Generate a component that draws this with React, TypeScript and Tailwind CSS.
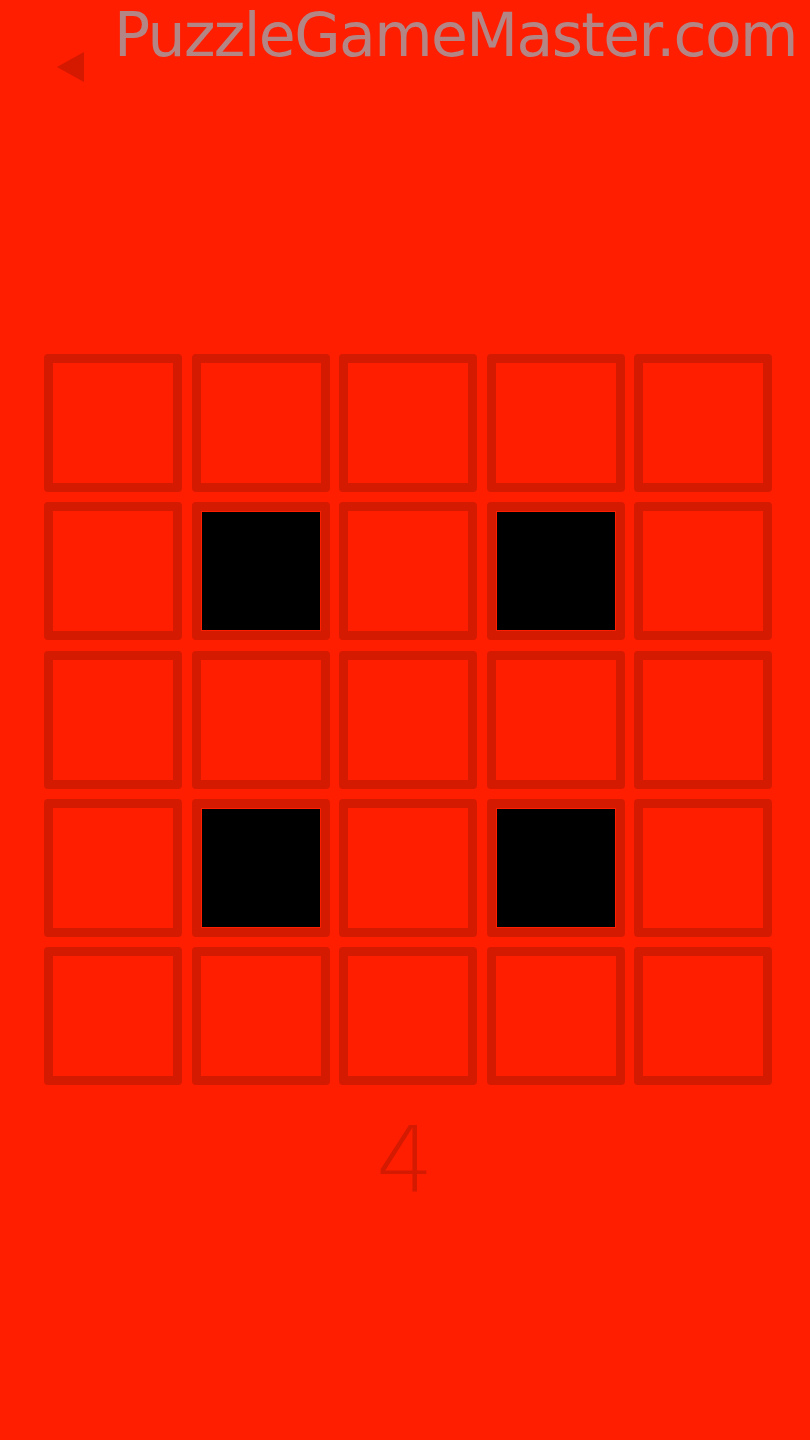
export default function App() {
  const dark = new Set([6, 8, 16, 18]);
  return (
    <div className="w-[810px] h-[1440px] bg-[#ff1e00] overflow-hidden flex flex-col">
      <div className="h-[56px] pl-[114px] flex items-start">
        <span
          className="text-[60px] leading-[70px] text-[#b38585] whitespace-nowrap tracking-[-1.6px]"
          style={{ fontFamily: '"DejaVu Sans", sans-serif' }}
        >
          PuzzleGameMaster.com
        </span>
      </div>
      <div className="pl-[57px] h-[30px] mt-[-4px]">
        <svg width="28" height="30" viewBox="0 0 28 30">
          <polygon points="27,0 27,30 0,15" fill="#d41900" />
        </svg>
      </div>
      <div className="mt-[272px] ml-[44px] grid grid-cols-[repeat(5,138px)] grid-rows-[repeat(5,138px)] gap-x-[9.5px] gap-y-[10.25px]">
        {Array.from({ length: 25 }, (_, i) => (
          <div key={i} className="border-[9px] border-[#d41a00] rounded-[4px] p-px">
            {dark.has(i) && <div className="w-full h-full bg-black" />}
          </div>
        ))}
      </div>
      <div
        className="mt-[24px] text-center text-[90px] leading-[104px] font-light text-[#d41a00]"
        style={{ fontFamily: '"DejaVu Sans", sans-serif' }}
      >
        4
      </div>
    </div>
  );
}
